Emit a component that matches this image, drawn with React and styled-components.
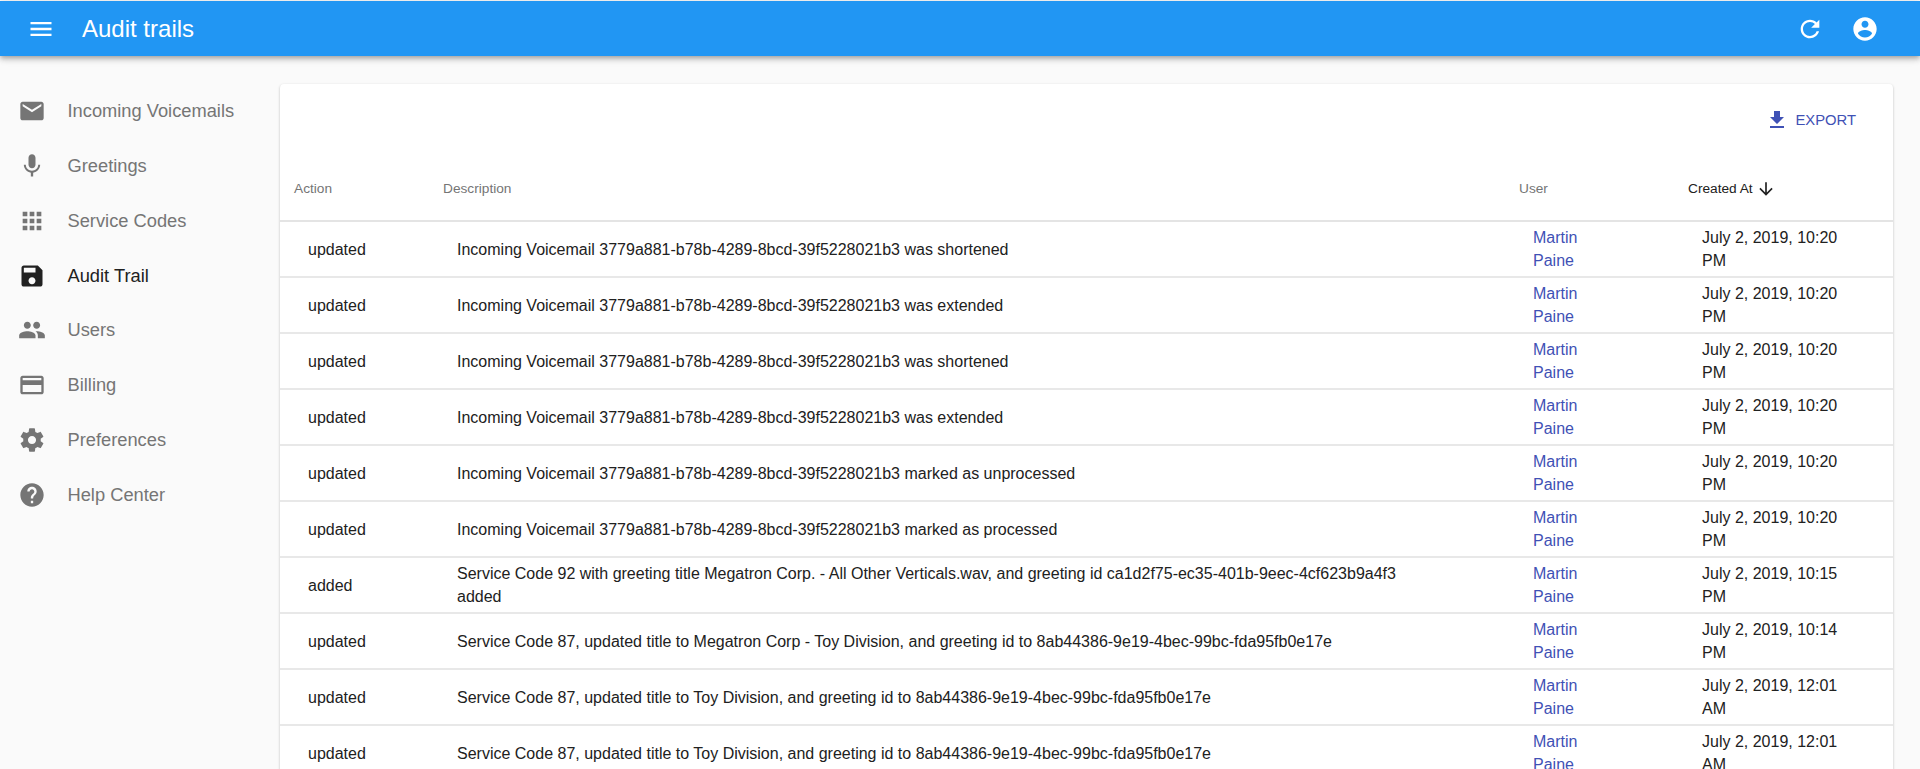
import React from 'react';
import styled, { createGlobalStyle } from 'styled-components';

const GlobalStyle = createGlobalStyle`
  html, body {
    margin: 0;
    height: 100%;
    overflow: hidden;
    background: #fafafa;
    font-family: "Liberation Sans", Arial, sans-serif;
  }
`;

const icons = {
  menu: 'M3 18h18v-2H3v2zm0-5h18v-2H3v2zm0-7v2h18V6H3z',
  refresh:
    'M17.65 6.35C16.2 4.9 14.21 4 12 4c-4.42 0-7.99 3.58-7.99 8s3.57 8 7.99 8c3.73 0 6.84-2.55 7.73-6h-2.08c-.82 2.33-3.04 4-5.65 4-3.31 0-6-2.69-6-6s2.69-6 6-6c1.66 0 3.14.69 4.22 1.78L13 11h7V4l-2.35 2.35z',
  account:
    'M12 2C6.48 2 2 6.48 2 12s4.48 10 10 10 10-4.48 10-10S17.52 2 12 2zm0 3c1.66 0 3 1.34 3 3s-1.34 3-3 3-3-1.34-3-3 1.34-3 3-3zm0 14.2c-2.5 0-4.71-1.28-6-3.22.03-1.99 4-3.08 6-3.08 1.99 0 5.97 1.09 6 3.08-1.29 1.94-3.5 3.22-6 3.22z',
  mail: 'M20 4H4c-1.1 0-1.99.9-1.99 2L2 18c0 1.1.9 2 2 2h16c1.1 0 2-.9 2-2V6c0-1.1-.9-2-2-2zm0 4l-8 5-8-5V6l8 5 8-5v2z',
  mic: 'M12 14c1.66 0 2.99-1.34 2.99-3L15 5c0-1.66-1.34-3-3-3S9 3.34 9 5v6c0 1.66 1.34 3 3 3zm5.3-3c0 3-2.54 5.1-5.3 5.1S6.7 14 6.7 11H5c0 3.41 2.72 6.23 6 6.72V21h2v-3.28c3.28-.48 6-3.3 6-6.72h-1.7z',
  apps: 'M4 8h4V4H4v4zm6 12h4v-4h-4v4zm-6 0h4v-4H4v4zm0-6h4v-4H4v4zm6 0h4v-4h-4v4zm6-10v4h4V4h-4zm-6 4h4V4h-4v4zm6 6h4v-4h-4v4zm0 6h4v-4h-4v4z',
  save: 'M17 3H5c-1.11 0-2 .9-2 2v14c0 1.1.89 2 2 2h14c1.1 0 2-.9 2-2V7l-4-4zm-5 16c-1.66 0-3-1.34-3-3s1.34-3 3-3 3 1.34 3 3-1.34 3-3 3zm3-10H5V5h10v4z',
  people:
    'M16 11c1.66 0 2.99-1.34 2.99-3S17.66 5 16 5c-1.66 0-3 1.34-3 3s1.34 3 3 3zm-8 0c1.66 0 2.99-1.34 2.99-3S9.66 5 8 5C6.34 5 5 6.34 5 8s1.34 3 3 3zm0 2c-2.33 0-7 1.17-7 3.5V19h14v-2.5c0-2.33-4.67-3.5-7-3.5zm8 0c-.29 0-.62.02-.97.05 1.16.84 1.97 1.97 1.97 3.45V19h6v-2.5c0-2.33-4.67-3.5-7-3.5z',
  card: 'M20 4H4c-1.11 0-1.99.89-1.99 2L2 18c0 1.11.89 2 2 2h16c1.11 0 2-.89 2-2V6c0-1.11-.89-2-2-2zm0 14H4v-6h16v6zm0-10H4V6h16v2z',
  settings:
    'M19.43 12.98c.04-.32.07-.64.07-.98s-.03-.66-.07-.98l2.11-1.65c.19-.15.24-.42.12-.64l-2-3.46c-.12-.22-.39-.3-.61-.22l-2.49 1c-.52-.4-1.08-.73-1.69-.98l-.38-2.65C14.46 2.18 14.25 2 14 2h-4c-.25 0-.46.18-.49.42l-.38 2.65c-.61.25-1.17.59-1.69.98l-2.49-1c-.23-.09-.49 0-.61.22l-2 3.46c-.13.22-.07.49.12.64l2.11 1.65c-.04.32-.07.65-.07.98s.03.66.07.98l-2.11 1.65c-.19.15-.24.42-.12.64l2 3.46c.12.22.39.3.61.22l2.49-1c.52.4 1.08.73 1.69.98l.38 2.65c.03.24.24.42.49.42h4c.25 0 .46-.18.49-.42l.38-2.65c.61-.25 1.17-.59 1.69-.98l2.49 1c.23.09.49 0 .61-.22l2-3.46c.12-.22.07-.49-.12-.64l-2.11-1.65zM12 15.5c-1.93 0-3.5-1.57-3.5-3.5s1.57-3.5 3.5-3.5 3.5 1.57 3.5 3.5-1.57 3.5-3.5 3.5z',
  help: 'M12 2C6.48 2 2 6.48 2 12s4.48 10 10 10 10-4.48 10-10S17.52 2 12 2zm1 17h-2v-2h2v2zm2.07-7.75l-.9.92C13.45 12.9 13 13.5 13 15h-2v-.5c0-1.1.45-2.1 1.17-2.83l1.24-1.26c.37-.36.59-.86.59-1.41 0-1.1-.9-2-2-2s-2 .9-2 2H8c0-2.21 1.79-4 4-4s4 1.79 4 4c0 .88-.36 1.68-.93 2.25z',
  download: 'M19 9h-4V3H9v6H5l7 7 7-7zM5 18v2h14v-2H5z',
  arrowDown: 'M20 12l-1.41-1.41L13 16.17V4h-2v12.17l-5.58-5.59L4 12l8 8 8-8z',
};

const Svg = styled.svg`
  width: ${(p) => p.$size}px;
  height: ${(p) => p.$size}px;
  fill: currentColor;
  flex-shrink: 0;
`;

const Icon = ({ name, size = 28 }) => (
  <Svg $size={size} viewBox="0 0 24 24">
    <path d={icons[name]} />
  </Svg>
);

const Page = styled.div`
  height: 100vh;
  padding-top: 1px;
  box-sizing: border-box;
  display: flex;
  flex-direction: column;
  overflow: hidden;
`;

const AppBar = styled.header`
  height: 55px;
  flex-shrink: 0;
  background: #2196f3;
  color: #fff;
  display: flex;
  align-items: center;
  padding: 0 41px 0 27px;
  box-shadow: 0 2px 4px -1px rgba(0, 0, 0, 0.2), 0 4px 5px 0 rgba(0, 0, 0, 0.14),
    0 1px 10px 0 rgba(0, 0, 0, 0.12);
  position: relative;
  z-index: 2;
`;

const Title = styled.h1`
  margin: 0 0 0 27px;
  font-size: 24px;
  font-weight: 400;
  flex: 1;
`;

const BarActions = styled.div`
  display: flex;
  align-items: center;
  gap: 27px;
`;

const Body = styled.div`
  flex: 1;
  display: flex;
  align-items: flex-start;
  min-height: 0;
`;

const Sidebar = styled.nav`
  width: 280px;
  flex-shrink: 0;
  padding-top: 27.5px;
`;

const NavItem = styled.div`
  height: 54.86px;
  display: flex;
  align-items: center;
  gap: 21.5px;
  padding-left: 18px;
  font-size: 18.3px;
  color: ${(p) => (p.$active ? '#212121' : '#757575')};
`;

const Card = styled.main`
  width: 1613px;
  margin-top: 28px;
  background: #fff;
  border-radius: 4px;
  box-shadow: 0 1px 3px 0 rgba(0, 0, 0, 0.2), 0 1px 1px 0 rgba(0, 0, 0, 0.14),
    0 2px 1px -1px rgba(0, 0, 0, 0.12);
`;

const Toolbar = styled.div`
  height: 71px;
  display: flex;
  justify-content: flex-end;
  align-items: center;
  padding-right: 37px;
`;

const ExportButton = styled.button`
  border: 0;
  background: none;
  padding: 0;
  display: flex;
  align-items: center;
  gap: 6px;
  font: 400 14.8px "Liberation Sans", Arial, sans-serif;
  color: #3f51b5;
`;

const Table = styled.table`
  width: 100%;
  table-layout: fixed;
  border-collapse: collapse;
`;

const HeadCell = styled.th`
  box-sizing: border-box;
  height: 66px;
  padding: 2px 0 0 14px;
  text-align: left;
  font-size: 13.7px;
  font-weight: 400;
  color: ${(p) => (p.$sorted ? '#212121' : '#757575')};
  border-bottom: 2px solid #e4e4e4;
  width: ${(p) => p.$width}px;
`;

const SortLabel = styled.span`
  display: inline-flex;
  align-items: center;
  gap: 3px;
`;

const Row = styled.tr`
  height: 54px;
  border-bottom: 2px solid #e8e8e8;
`;

const Cell = styled.td`
  padding: 4px 32px 4px 28px;
  font-size: 16px;
  line-height: 23px;
  color: #212121;
  vertical-align: middle;
`;

const DescriptionCell = styled(Cell)`
  padding-right: 80px;
`;

const UserLink = styled.a`
  display: block;
  max-width: 60px;
  color: #3f51b5;
`;

const nav = [
  ['mail', 'Incoming Voicemails'],
  ['mic', 'Greetings'],
  ['apps', 'Service Codes'],
  ['save', 'Audit Trail', true],
  ['people', 'Users'],
  ['card', 'Billing'],
  ['settings', 'Preferences'],
  ['help', 'Help Center'],
];

const vm = 'Incoming Voicemail 3779a881-b78b-4289-8bcd-39f5228021b3';
const rows = [
  ['updated', `${vm} was shortened`, 'July 2, 2019, 10:20 PM'],
  ['updated', `${vm} was extended`, 'July 2, 2019, 10:20 PM'],
  ['updated', `${vm} was shortened`, 'July 2, 2019, 10:20 PM'],
  ['updated', `${vm} was extended`, 'July 2, 2019, 10:20 PM'],
  ['updated', `${vm} marked as unprocessed`, 'July 2, 2019, 10:20 PM'],
  ['updated', `${vm} marked as processed`, 'July 2, 2019, 10:20 PM'],
  [
    'added',
    'Service Code 92 with greeting title Megatron Corp. - All Other Verticals.wav, and greeting id ca1d2f75-ec35-401b-9eec-4cf623b9a4f3 added',
    'July 2, 2019, 10:15 PM',
  ],
  [
    'updated',
    'Service Code 87, updated title to Megatron Corp - Toy Division, and greeting id to 8ab44386-9e19-4bec-99bc-fda95fb0e17e',
    'July 2, 2019, 10:14 PM',
  ],
  [
    'updated',
    'Service Code 87, updated title to Toy Division, and greeting id to 8ab44386-9e19-4bec-99bc-fda95fb0e17e',
    'July 2, 2019, 12:01 AM',
  ],
  [
    'updated',
    'Service Code 87, updated title to Toy Division, and greeting id to 8ab44386-9e19-4bec-99bc-fda95fb0e17e',
    'July 2, 2019, 12:01 AM',
  ],
];

export default function App() {
  return (
    <>
      <GlobalStyle />
      <Page>
        <AppBar>
          <Icon name="menu" />
          <Title>Audit trails</Title>
          <BarActions>
            <Icon name="refresh" />
            <Icon name="account" />
          </BarActions>
        </AppBar>
        <Body>
          <Sidebar>
            {nav.map(([icon, label, active]) => (
              <NavItem key={label} $active={active}>
                <Icon name={icon} />
                {label}
              </NavItem>
            ))}
          </Sidebar>
          <Card>
            <Toolbar>
              <ExportButton>
                <Icon name="download" size={24} />
                EXPORT
              </ExportButton>
            </Toolbar>
            <Table>
              <thead>
                <tr>
                  <HeadCell $width={149}>Action</HeadCell>
                  <HeadCell $width={1076}>Description</HeadCell>
                  <HeadCell $width={169}>User</HeadCell>
                  <HeadCell $sorted>
                    <SortLabel>
                      Created At
                      <Icon name="arrowDown" size={20} />
                    </SortLabel>
                  </HeadCell>
                </tr>
              </thead>
              <tbody>
                {rows.map(([action, description, created], i) => (
                  <Row key={i}>
                    <Cell>{action}</Cell>
                    <DescriptionCell>{description}</DescriptionCell>
                    <Cell>
                      <UserLink>Martin Paine</UserLink>
                    </Cell>
                    <Cell>{created}</Cell>
                  </Row>
                ))}
              </tbody>
            </Table>
          </Card>
        </Body>
      </Page>
    </>
  );
}
